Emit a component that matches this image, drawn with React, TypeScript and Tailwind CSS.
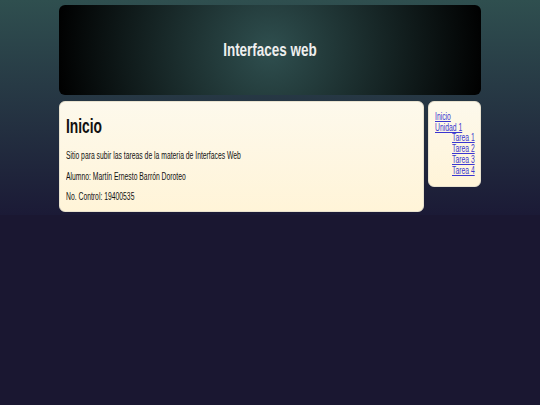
import React from "react";

const font = { fontFamily: '"Liberation Sans", Arial, sans-serif' };

export default function App() {
  return (
    <div
      className="min-h-[405px] w-full bg-[#1a1731] bg-[linear-gradient(to_bottom,#2f4f4f_0px,#1b1a36_215px,#1a1731_215px)]"
      style={font}
    >
      <div className="mx-auto w-[422px] pt-[5px]">
        <header className="flex h-[90px] items-center justify-center rounded-[6px] bg-[radial-gradient(circle,#2f4f4f_0%,#000_100%)]">
          <h1 className="inline-block origin-center scale-x-[0.71] text-[19px] font-bold text-[#eeeeee]">Interfaces web</h1>
        </header>
        <div className="mt-[6px] flex items-start gap-[4px]">
          <main className="w-[365px] rounded-[6px] border border-[#e8e2cf] bg-[linear-gradient(to_bottom,#fdf9ec,#fff4d8)] px-[6px] pb-[9px] pt-[12px] text-[#111]">
            <h2 className="origin-left scale-x-[0.69] text-[20px] font-bold leading-[24px]">Inicio</h2>
            <p className="mt-[12px] origin-left scale-x-[0.68] text-[10px] leading-[11px]">Sitio para subir las tareas de la materia de Interfaces Web</p>
            <p className="mt-[9.5px] origin-left scale-x-[0.68] text-[10px] leading-[11px]">Alumno: Martín Ernesto Barrón Doroteo</p>
            <p className="mt-[9.5px] origin-left scale-x-[0.68] text-[10px] leading-[11px]">No. Control: 19400535</p>
          </main>
          <nav className="w-[53px] rounded-[6px] border border-[#e8e2cf] bg-[linear-gradient(to_bottom,#fdf9ec,#fff4d8)] px-[6px] pb-[10px] pt-[10px] text-[10px] leading-[10.7px] text-[#3a36d0]">
            <div className="whitespace-nowrap">
              <div><a href="#" className="inline-block origin-left scale-x-[0.68] underline">Inicio</a></div>
              <div><a href="#" className="inline-block origin-left scale-x-[0.68] underline">Unidad 1</a></div>
              <div className="pl-[17px]">
                <div><a href="#" className="inline-block origin-left scale-x-[0.68] underline">Tarea 1</a></div>
                <div><a href="#" className="inline-block origin-left scale-x-[0.68] underline">Tarea 2</a></div>
                <div><a href="#" className="inline-block origin-left scale-x-[0.68] underline">Tarea 3</a></div>
                <div><a href="#" className="inline-block origin-left scale-x-[0.68] underline">Tarea 4</a></div>
              </div>
            </div>
          </nav>
        </div>
      </div>
    </div>
  );
}
